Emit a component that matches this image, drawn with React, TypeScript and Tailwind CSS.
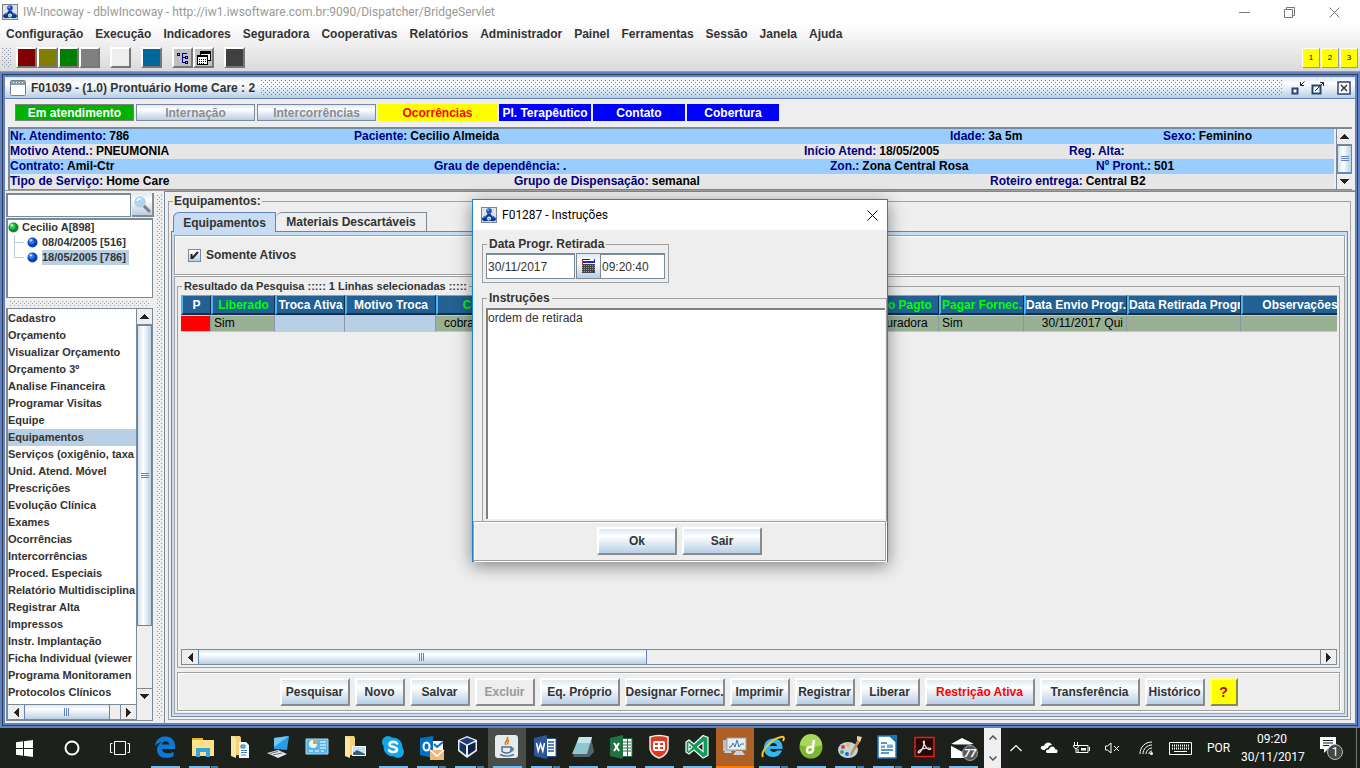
import { ReactNode } from "react";
import clsx from "clsx";

interface Field {
  label: string;
  value: string;
}

interface Column {
  title: string;
  width: string;
  green?: boolean;
  value?: string;
  cell: string;
}

const menus = [
  "Configuração",
  "Execução",
  "Indicadores",
  "Seguradora",
  "Cooperativas",
  "Relatórios",
  "Administrador",
  "Painel",
  "Ferramentas",
  "Sessão",
  "Janela",
  "Ajuda",
];

const infoRows: { grid: string; fields: Field[] }[] = [
  {
    grid: "grid-cols-[344fr_596fr_213fr_171fr] bg-[#99ccff]",
    fields: [
      { label: "Nr. Atendimento:", value: "786" },
      { label: "Paciente:", value: "Cecilio Almeida" },
      { label: "Idade:", value: "3a 5m" },
      { label: "Sexo:", value: "Feminino" },
    ],
  },
  {
    grid: "grid-cols-[794fr_265fr_265fr] bg-[#e6e6e6]",
    fields: [
      { label: "Motivo Atend.:", value: "PNEUMONIA" },
      { label: "Início Atend:", value: "18/05/2005" },
      { label: "Reg. Alta:", value: "" },
    ],
  },
  {
    grid: "grid-cols-[424fr_396fr_266fr_238fr] bg-[#99ccff]",
    fields: [
      { label: "Contrato:", value: "Amil-Ctr" },
      { label: "Grau de dependência:", value: "." },
      { label: "Zon.:", value: "Zona Central Rosa" },
      { label: "Nº Pront.:", value: "501" },
    ],
  },
  {
    grid: "grid-cols-[504fr_476fr_344fr] bg-[#e6e6e6]",
    fields: [
      { label: "Tipo de Serviço:", value: "Home Care" },
      { label: "Grupo de Dispensação:", value: "semanal" },
      { label: "Roteiro entrega:", value: "Central B2" },
    ],
  },
];

const sections = [
  "Cadastro",
  "Orçamento",
  "Visualizar Orçamento",
  "Orçamento 3º",
  "Analise Financeira",
  "Programar Visitas",
  "Equipe",
  "Equipamentos",
  "Serviços (oxigênio, taxa",
  "Unid. Atend. Móvel",
  "Prescrições",
  "Evolução Clínica",
  "Exames",
  "Ocorrências",
  "Intercorrências",
  "Proced. Especiais",
  "Relatório Multidisciplina",
  "Registrar Alta",
  "Impressos",
  "Instr. Implantação",
  "Ficha Individual (viewer",
  "Programa Monitoramen",
  "Protocolos Clínicos",
];

const columns: Column[] = [
  { title: "P", width: "w-[30px]", cell: "bg-[#ff0000]" },
  { title: "Liberado", width: "w-[64px]", green: true, value: "Sim", cell: "bg-[#99b095]" },
  { title: "Troca Ativa", width: "w-[70px]", cell: "bg-[#b8cfe5]" },
  { title: "Motivo Troca", width: "w-[91px]", cell: "bg-[#b8cfe5]" },
  { title: "Cobrança", width: "w-[108px]", green: true, value: "cobrança", cell: "bg-[#99b095] pl-2" },
  { title: "", width: "w-[318px]", cell: "bg-[#99b095]" },
  { title: "Tipo Pagto", width: "w-[77px]", green: true, value: "Seguradora", cell: "bg-[#99b095]" },
  { title: "Pagar Fornec.", width: "w-[85px]", green: true, value: "Sim", cell: "bg-[#99b095]" },
  { title: "Data Envio Progr.", width: "w-[103px]", value: "30/11/2017 Qui", cell: "bg-[#99b095] text-right" },
  { title: "Data Retirada Progr.", width: "w-[114px]", cell: "bg-[#99b095]" },
  { title: "Observações", width: "w-[117px]", cell: "bg-[#99b095]" },
];

const raised =
  "border-2 border-t-white border-l-white border-r-[#8a8a8a] border-b-[#8a8a8a] text-xs font-bold text-[#333] whitespace-nowrap flex items-center justify-center";
const metal = "bg-linear-to-b from-[#dde8f3] via-white via-30% to-[#b8cfe5]";
const etched = "border border-[#a0a0a0] shadow-[inset_1px_1px_0_#fff,1px_1px_0_#fff]";
const dots = "bg-size-[4px_4px] bg-position-[0_0,2px_2px]";
const blueDots =
  "bg-[conic-gradient(at_1px_1px,transparent_75%,#6382bf_0),conic-gradient(at_1px_1px,transparent_75%,#6382bf_0)]";
const grayDots =
  "bg-[conic-gradient(at_1px_1px,transparent_75%,#8a97a5_0),conic-gradient(at_1px_1px,transparent_75%,#8a97a5_0)]";

function AppIcon() {
  return (
    <svg viewBox="0 0 16 16" className="size-4 shrink-0">
      <rect x=".5" y=".5" width="15" height="15" fill="#dfe3e8" stroke="#7f848c" />
      <path d="M6.500 6.500h3l1 2c3 .5 4.500 2 4.500 3.500 0 2-2.500 2.500-4 2H5c-1.500.5-4 0-4-2 0-1.500 1.500-3 4.500-3.500z" fill="#0a3aa0" />
      <path d="M2.500 11c.5-1 1.500-1.500 2.500-1.500M13.500 11c-.5-1-1.500-1.500-2.500-1.500" stroke="#5f9df0" fill="none" />
      <circle cx="8" cy="4" r="2.800" fill="#1450b8" />
      <circle cx="7.200" cy="3.200" r="1.100" fill="#6ea8f5" />
      <circle cx="8" cy="11.500" r="2" fill="#e6f5ea" />
      <path d="M7.200 10.800l1.800 2" stroke="#2c8a3f" />
    </svg>
  );
}

function Arrow({ dir }: { dir: "up" | "down" | "left" | "right" }) {
  const shapes = {
    up: "M4 0h1l4 5H0z",
    down: "M0 0h9L5 5H4z",
    left: "M5 0v9L0 5V4z",
    right: "M0 0l5 4v1L0 9z",
  };
  const wide = dir === "up" || dir === "down";
  return (
    <svg width={wide ? 9 : 5} height={wide ? 5 : 9} shapeRendering="crispEdges">
      <path d={shapes[dir]} fill="#222" />
    </svg>
  );
}

function VScroll({ thumb }: { thumb: string }) {
  return (
    <div className="w-4 shrink-0 flex flex-col border-l border-[#7a8a99] bg-[#eee]">
      <button aria-label="Rolar para cima" className="h-4 shrink-0 flex items-center justify-center border-b border-[#7a8a99]">
        <Arrow dir="up" />
      </button>
      <div className="flex-1 min-h-0">
        <div className={clsx("border border-[#6382bf] bg-linear-to-r from-[#cfdfee] via-white via-40% to-[#b8cfe5] flex items-center justify-center", thumb)}>
          <span className="w-2 h-[6px] bg-[repeating-linear-gradient(#6382bf_0_1px,transparent_1px_2px)]" />
        </div>
      </div>
      <button aria-label="Rolar para baixo" className="h-4 shrink-0 flex items-center justify-center border-t border-[#7a8a99]">
        <Arrow dir="down" />
      </button>
    </div>
  );
}

function HScroll({ thumb }: { thumb: string }) {
  return (
    <div className="h-4 flex flex-1 min-w-0 border-y border-[#7a8a99] bg-[#eee]">
      <button aria-label="Rolar para a esquerda" className="w-4 shrink-0 flex items-center justify-center">
        <Arrow dir="left" />
      </button>
      <div className="flex-1 min-w-0 flex">
        <div className={clsx("border-x border-[#6382bf] flex items-center justify-center", metal, thumb)}>
          <span className="h-2 w-[6px] bg-[repeating-linear-gradient(90deg,#6382bf_0_1px,transparent_1px_2px)]" />
        </div>
      </div>
      <button aria-label="Rolar para a direita" className="w-4 shrink-0 flex items-center justify-center border-l border-[#7a8a99]">
        <Arrow dir="right" />
      </button>
    </div>
  );
}

function TitleBar() {
  return (
    <header className="h-6 bg-white flex items-center pl-[2px] gap-[5px] text-[#999]">
      <AppIcon />
      <h1 className="font-['Roboto',sans-serif] text-xs flex-1">
        IW-Incoway - dblwIncoway - http://iw1.iwsoftware.com.br:9090/Dispatcher/BridgeServlet
      </h1>
      <div className="flex gap-[34px] pr-5">
        <button aria-label="Minimizar">
          <svg width="11" height="11" stroke="#777"><path d="M0 5.500h11" /></svg>
        </button>
        <button aria-label="Restaurar">
          <svg width="11" height="11" stroke="#777" fill="none">
            <path d="M.5 2.500h8v8h-8zM2.500 2.500v-2h8v8h-2" />
          </svg>
        </button>
        <button aria-label="Fechar">
          <svg width="11" height="11" stroke="#777"><path d="M.5.5l10 10M10.500.5l-10 10" /></svg>
        </button>
      </div>
    </header>
  );
}

function ToolButton({ color, label, children }: { color: string; label: string; children?: ReactNode }) {
  return (
    <button
      aria-label={label}
      className={clsx("size-[21px] border-2 border-t-white border-l-white border-r-[#777] border-b-[#777] flex items-center justify-center", color)}
    >
      {children}
    </button>
  );
}

function MenuAndTools() {
  return (
    <div className="bg-linear-to-b from-white to-[#dadada] border-b border-[#999]">
      <nav className="h-5 flex items-center gap-3 px-[6px] text-xs font-bold text-[#333]">
        {menus.map((item) => (
          <button key={item}>{item}</button>
        ))}
      </nav>
      <div className="h-[27px] flex items-center pl-[2px] pr-[2px]">
        <span className={clsx("w-[10px] h-5 mr-1", grayDots, dots)} />
        <ToolButton color="bg-[#800000]" label="Vermelho" />
        <ToolButton color="bg-[#808000]" label="Oliva" />
        <ToolButton color="bg-[#008000]" label="Verde" />
        <ToolButton color="bg-[#808080]" label="Cinza" />
        <span className="w-[10px]" />
        <ToolButton color="bg-[#eee]" label="Branco" />
        <span className="w-[10px]" />
        <ToolButton color="bg-[#006699]" label="Azul" />
        <span className="w-[10px]" />
        <ToolButton color="bg-[#c0c0c0]" label="Árvore">
          <svg width="14" height="14" fill="none" stroke="#000080" shapeRendering="crispEdges">
            <path d="M1.500 2.500h2v2h-2zM6.500 2v10M6 2.500h5M7 6.500h2M7 11.500h2M9.500 5.500h2v2h-2zM9.500 10.500h2v2h-2z" />
          </svg>
        </ToolButton>
        <ToolButton color="bg-[#c0c0c0]" label="Janelas">
          <svg width="16" height="15" shapeRendering="crispEdges">
            <path d="M4.500 1.500h10v9h-10z" fill="#fff" stroke="#000" />
            <path d="M4 1h11v3H4z" />
            <path d="M1.500 5.500h10v9h-10z" fill="#fff" stroke="#000" />
            <path d="M1 5h11v2H1z" />
            <path d="M3 9.500h7M3 11.500h7M3 13.500h5" stroke="#000" strokeDasharray="1 1" />
          </svg>
        </ToolButton>
        <span className="w-[10px]" />
        <ToolButton color="bg-[#404040]" label="Preto" />
        <div className="ml-auto flex gap-px text-[8px] text-black">
          {["1", "2", "3"].map((n) => (
            <button key={n} className="w-[18px] h-5 bg-[#ffff00] border border-t-white border-l-white border-r-[#999] border-b-[#999]">
              {n}
            </button>
          ))}
        </div>
      </div>
    </div>
  );
}

function FrameTitle() {
  return (
    <div className="h-[22px] bg-linear-to-b from-[#dde8f3] via-white via-30% to-[#b8cfe5] border-b border-[#6382bf] flex items-center pl-[5px] pr-1">
      <svg width="16" height="16">
        <rect x=".5" y=".5" width="15" height="15" rx="1" fill="#fff" stroke="#73808e" />
        <path d="M1 1h14v4H1z" fill="#8b9aab" />
        <path d="M3 2.500h11" stroke="#fff" strokeDasharray="1 2" />
      </svg>
      <h2 className="text-xs font-bold text-[#333] ml-[5px] mr-[6px]">F01039 - (1.0) Prontuário Home Care : 2</h2>
      <span className={clsx("flex-1 h-[15px]", blueDots, dots)} />
      <div className="flex gap-[6px] pl-2">
        <button aria-label="Minimizar quadro">
          <svg width="14" height="16" fill="none" stroke="#222">
            <path d="M1.500 8.500h5v5h-5z" fill="#fff" stroke="#2c4374" strokeWidth="2" />
            <path d="M9.500 2v3.500H13M13.500 1.500l-4 4" />
          </svg>
        </button>
        <button aria-label="Maximizar quadro">
          <svg width="14" height="16" fill="none" stroke="#222">
            <path d="M1.500 5.500h8v8h-8z" fill="#fff" stroke="#2c4374" strokeWidth="2" />
            <path d="M4 11l8.500-8.500M9 2.500h3.500V6" />
          </svg>
        </button>
        <button aria-label="Fechar quadro" className="pl-[6px]">
          <svg width="14" height="16" fill="none" stroke="#222">
            <path d="M1 2h12v12H1z" fill="#fff" stroke="#2c4374" strokeWidth="1.500" />
            <path d="M4 5l6 6M10 5l-6 6" strokeWidth="1.200" />
          </svg>
        </button>
      </div>
    </div>
  );
}

function StatusButtons() {
  const base = "h-[17px] text-xs font-bold flex items-center justify-center whitespace-nowrap";
  return (
    <div className="h-7 pt-[5px] pl-[10px] flex gap-[2px]">
      <button className={clsx(base, "w-[119px] bg-[#00b200] text-white border border-[#808080]")}>Em atendimento</button>
      <button disabled className={clsx(base, metal, "w-[119px] text-[#8c8c8c] border border-[#7a8a99]")}>Internação</button>
      <button disabled className={clsx(base, metal, "w-[119px] text-[#8c8c8c] border border-[#7a8a99]")}>Intercorrências</button>
      <button className={clsx(base, "w-[119px] bg-[#ffff00] text-[#ff0000]")}>Ocorrências</button>
      <button className={clsx(base, "w-[92px] bg-[#0000ff] text-white")}>Pl. Terapêutico</button>
      <button className={clsx(base, "w-[92px] bg-[#0000ff] text-white")}>Contato</button>
      <button className={clsx(base, "w-[92px] bg-[#0000ff] text-white")}>Cobertura</button>
    </div>
  );
}

function PatientInfo() {
  return (
    <div className="mx-[3px] flex gap-[2px] border-t-2 border-l-2 border-b border-[#7a8a99] bg-[#eee]">
      <div className="flex-1">
        {infoRows.map((row, i) => (
          <dl key={i} className={clsx("grid text-xs leading-[15px] font-bold h-[15px] whitespace-nowrap", row.grid)}>
            {row.fields.map((field) => (
              <div key={field.label} className="flex gap-[3px]">
                <dt className="text-[#000080]">{field.label}</dt>
                <dd className="text-black">{field.value}</dd>
              </div>
            ))}
          </dl>
        ))}
      </div>
      <VScroll thumb="h-full" />
    </div>
  );
}

function Ball({ green }: { green?: boolean }) {
  return (
    <svg width="11" height="11" className="shrink-0">
      <circle cx="5.500" cy="5.500" r="5" fill={green ? "#0c8a2c" : "#0b3fae"} />
      <circle cx="4.500" cy="4.200" r="3" fill={green ? "#38c453" : "#3374e6"} />
      <circle cx="3.800" cy="3.300" r="1.300" fill={green ? "#c5f5cb" : "#bcd7ff"} />
    </svg>
  );
}

function Sidebar() {
  return (
    <aside className="w-[148px] shrink-0 flex flex-col text-[11px] font-bold text-[#333]">
      <form className="flex h-6 gap-px">
        <input aria-label="Pesquisar paciente" className="w-[125px] bg-white border-2 border-[#7a8a99] border-r border-b" />
        <button type="button" aria-label="Pesquisar" className={clsx("flex-1 flex items-center justify-center border-r-2 border-b-2 border-[#8a8a8a]", metal)}>
          <svg width="18" height="18" fill="none">
            <path d="M10.500 10.500l5.500 5.500" stroke="#7d7f84" strokeWidth="3" strokeLinecap="round" />
            <circle cx="7" cy="7" r="5" fill="#a5d8f6" stroke="#c5ccd6" strokeWidth="1.500" />
            <path d="M4 6c.6-1.800 2.500-2.500 4-2" stroke="#fff" strokeWidth="1.500" />
          </svg>
        </button>
      </form>
      <ul className="mt-px mr-px h-20 bg-white border border-[#7a8a99] border-l-2 border-t-2 leading-[15px]">
        <li>
          <span className="flex items-center gap-[3px] h-[15px]">
            <Ball green />
            Cecilio A[898]
          </span>
          <ul className="ml-[6px]">
            <li className="flex items-center h-[15px]">
              <span className="w-[10px] h-[15px] border-l border-[#b8cfe5] flex items-center">
                <span className="w-full h-px bg-[#b8cfe5]" />
              </span>
              <span className="ml-[3px] mr-1 flex"><Ball /></span>
              08/04/2005 [516]
            </li>
            <li className="flex items-center h-[15px]">
              <span className="w-[10px] h-[15px]">
                <span className="block h-2 border-l border-b border-[#b8cfe5]" />
              </span>
              <span className="ml-[3px] mr-1 flex"><Ball /></span>
              <span className="bg-[#b8cfe5] pr-[3px]">18/05/2005 [786]</span>
            </li>
          </ul>
        </li>
      </ul>
      <div className="h-[10px] flex items-center px-1">
        <span className={clsx("h-[5px] flex-1", grayDots, dots)} />
      </div>
      <div className="flex-1 min-h-0 mr-px flex flex-col border border-[#7a8a99] border-l-2">
        <div className="flex-1 min-h-0 flex bg-white">
          <ul className="flex-1 min-w-0 overflow-hidden pt-px">
            {sections.map((item) => (
              <li key={item} className={clsx("h-[17px] leading-[17px] whitespace-nowrap", item === "Equipamentos" && "bg-[#b8cfe5]")}>
                {item}
              </li>
            ))}
          </ul>
          <VScroll thumb="h-[83%]" />
        </div>
        <div className="flex bg-[#eee]">
          <HScroll thumb="w-[90%]" />
          <span className="w-4 border-l border-[#7a8a99]" />
        </div>
      </div>
    </aside>
  );
}

function ResultTable() {
  return (
    <div className="overflow-hidden flex-1 min-h-0 mt-[2px]">
      <table className="table-fixed w-[1177px] border-separate border-spacing-0 text-xs whitespace-nowrap">
        <thead>
          <tr>
            {columns.map((col, i) => (
              <th
                key={i}
                className={clsx(
                  "h-5 p-0 overflow-hidden bg-[#236093] border-t border-l-2 border-t-[#4fb3f5] border-l-[#4fb3f5] border-r border-b-2 border-r-[#12304a] border-b-[#12304a] leading-[16px]",
                  col.width,
                  col.green ? "text-[#00ff00]" : "text-white"
                )}
              >
                {col.title}
              </th>
            ))}
          </tr>
        </thead>
        <tbody>
          <tr>
            {columns.map((col, i) => (
              <td key={i} className={clsx("h-[17px] px-[3px] py-0 leading-[15px] overflow-hidden text-black border-y border-y-[#c8c8c8] border-r border-r-[#8a97a5]", col.cell)}>
                {col.value}
              </td>
            ))}
          </tr>
        </tbody>
      </table>
    </div>
  );
}

function ActionBar() {
  return (
    <div className={clsx("h-[39px] shrink-0 mr-[2px] flex items-center justify-center gap-[5px]", etched)}>
      <button className={clsx(raised, metal, "w-[70px] h-7")}>Pesquisar</button>
      <button className={clsx(raised, metal, "w-[50px] h-7")}>Novo</button>
      <button className={clsx(raised, metal, "w-[60px] h-7")}>Salvar</button>
      <button disabled className="w-[60px] h-7 border-2 border-t-white border-l-white border-r-[#8a8a8a] border-b-[#8a8a8a] text-xs font-bold text-[#999]">
        Excluir
      </button>
      <button className={clsx(raised, metal, "w-20 h-7")}>Eq. Próprio</button>
      <button className={clsx(raised, metal, "w-[100px] h-7")}>Designar Fornec.</button>
      <button className={clsx(raised, metal, "w-[60px] h-7")}>Imprimir</button>
      <button className={clsx(raised, metal, "w-[60px] h-7")}>Registrar</button>
      <button className={clsx(raised, metal, "w-[60px] h-7")}>Liberar</button>
      <button className={clsx("w-[110px] h-7 border-2 border-t-white border-l-white border-r-[#8a8a8a] border-b-[#8a8a8a] text-xs font-bold text-[#ff0000]", metal)}>
        Restrição Ativa
      </button>
      <button className={clsx(raised, metal, "w-[100px] h-7")}>Transferência</button>
      <button className={clsx(raised, metal, "w-[60px] h-7")}>Histórico</button>
      <button className="w-7 h-7 bg-[#ffff00] border-2 border-t-[#ffff80] border-l-[#ffff80] border-r-[#8a8a4a] border-b-[#8a8a4a] text-sm font-bold text-[#c00000]">
        ?
      </button>
    </div>
  );
}

function Equipment() {
  return (
    <main className="flex-1 min-w-0 flex border-l border-t border-[#7a8a99] pl-[3px] pr-1 pt-[2px] pb-[3px]">
      <fieldset className="flex-1 min-w-0 flex flex-col border border-[#a0a0a0] px-[2px] pb-[2px]">
        <legend className="text-xs leading-[14px] font-bold text-[#333] ml-[2px] px-px">Equipamentos:</legend>
        <div role="tablist" className="flex items-end pl-[2px] mt-1 text-xs font-bold text-[#333] relative -mb-px">
          <button role="tab" aria-selected="true" className="w-[103px] h-5 bg-[#c8ddf2] border border-b-0 border-[#6382bf] rounded-tl-md">
            Equipamentos
          </button>
          <button role="tab" aria-selected="false" className="w-[151px] h-5 border border-l-0 border-[#7a8a99] border-b-[#6382bf] rounded-tl-md">
            Materiais Descartáveis
          </button>
        </div>
        <div className="flex-1 min-h-0 flex flex-col border border-[#6382bf] border-r-[#7a8a99] border-b-[#7a8a99] bg-[#c8ddf2] px-[2px] pt-[3px] pb-[2px]">
          <div className="flex-1 min-h-0 flex flex-col bg-[#eee]">
            <div className={clsx("h-10 shrink-0 flex items-center pl-[13px]", etched)}>
              <label className="flex items-center gap-[5px] text-xs font-bold text-[#333]">
                <input
                  type="checkbox"
                  defaultChecked
                  className="peer appearance-none size-[13px] border border-[#7a8a99] bg-linear-to-b from-white to-[#b8cfe5]"
                />
                <svg width="9" height="9" className="hidden peer-checked:block -ml-4 mr-[2px]" fill="none" stroke="#222" strokeWidth="2">
                  <path d="M1.500 3v5M2 7.500L8 1" />
                </svg>
                Somente Ativos
              </label>
            </div>
            <div className="flex-1 min-h-0 flex flex-col border border-[#a0a0a0] mt-px p-[2px] gap-1">
              <fieldset className="flex-1 min-h-0 min-w-0 flex flex-col border border-[#a0a0a0] mr-[2px] pl-[3px] pr-[2px] pb-[2px]">
                <legend className="text-[11px] leading-[14px] font-bold text-[#333] ml-px px-[2px]">
                  Resultado da Pesquisa ::::: 1 Linhas selecionadas :::::
                </legend>
                <ResultTable />
                <div className="flex border-x border-[#7a8a99]">
                  <HScroll thumb="w-[40%]" />
                </div>
              </fieldset>
              <ActionBar />
            </div>
          </div>
        </div>
      </fieldset>
    </main>
  );
}

function InstructionsDialog() {
  return (
    <div
      role="dialog"
      aria-label="F01287 - Instruções"
      className="absolute inset-x-0 mx-auto top-[199px] w-[416px] h-[363px] bg-[#eee] border border-[#1883d7] shadow-[0_4px_16px_rgba(0,0,0,0.45)] flex flex-col"
    >
      <div className="h-[30px] bg-white flex items-center pl-2 pr-[9px] gap-[5px]">
        <AppIcon />
        <h3 className="font-['Roboto',sans-serif] text-xs text-black flex-1">F01287 - Instruções</h3>
        <button aria-label="Fechar">
          <svg width="11" height="11" stroke="#000"><path d="M.5.5l10 10M10.500.5l-10 10" /></svg>
        </button>
      </div>
      <div className="flex-1 min-h-0 flex flex-col pl-[9px] pt-[7px] gap-2">
        <fieldset className="w-[186px] border border-[#a0a0a0] px-[3px] pb-[3px]">
          <legend className="text-xs leading-[14px] font-bold text-[#333] ml-px px-[2px]">Data Progr. Retirada</legend>
          <div className="flex h-[26px] mt-[2px]">
            <input
              aria-label="Data"
              defaultValue="30/11/2017"
              className="w-[89px] bg-white border border-t-2 border-[#7a8a99] pl-px text-xs text-[#333]"
            />
            <button aria-label="Calendário" className={clsx("w-[25px] ml-px border border-[#7a8a99] flex items-center justify-center", metal)}>
              <svg width="15" height="16" shapeRendering="crispEdges">
                <path d="M1 1h8v1H1z" fill="#333" />
                <path d="M1 3h13v2H1z" fill="#2222dd" />
                <path d="M1 2h1v4H1z" fill="#d22" />
                <path d="M13 1h1v3h-1z" fill="#2222dd" />
                <path d="M1 6h13v9H1z" fill="#444" />
                <path d="M1 7.500h13M1 9.500h13M1 11.500h13M1 13.500h10" stroke="#999" strokeDasharray="1 1" />
              </svg>
            </button>
            <input
              aria-label="Hora"
              defaultValue="09:20:40"
              className="w-[64px] bg-white border border-l-0 border-t-2 border-[#7a8a99] pl-px text-xs text-[#333]"
            />
          </div>
        </fieldset>
        <fieldset className="flex-1 min-h-0 flex flex-col border border-b-0 border-[#a0a0a0] pl-[3px] pr-px pb-[2px]">
          <legend className="text-xs leading-[14px] font-bold text-[#333] ml-px px-[2px]">Instruções</legend>
          <textarea
            aria-label="Instruções"
            defaultValue="ordem de retirada"
            className="flex-1 mt-[3px] resize-none bg-white border-t-2 border-l-2 border-[#808080] pr-px pt-px text-xs leading-[14px] text-[#333]"
          />
        </fieldset>
      </div>
      <div className={clsx("h-10 mr-px flex items-center justify-center gap-[5px]", etched)}>
        <button className={clsx(raised, metal, "w-20 h-7")}>Ok</button>
        <button className={clsx(raised, metal, "w-20 h-7")}>Sair</button>
      </div>
    </div>
  );
}

function Folder() {
  return (
    <>
      <path d="M4 3h9l1 2v18l-3-1-7 1z" fill="#f3d27a" />
      <path d="M4 3l5 2v20l-5-2z" fill="#fbe6a2" />
    </>
  );
}

const tasks: { name: string; bar?: "one" | "many"; look?: string; art: ReactNode }[] = [
  {
    name: "Edge",
    bar: "one",
    art: (
      <path
        d="M4 13C5 6 9 3.500 14.500 3.500 21 3.500 24 8 24 13v3H11c.3 3 3 4.300 6 4.300 2 0 4-.5 5.500-1.500v4.500c-2 1.200-4.500 1.700-7 1.700-6 0-9.500-3.500-9.500-8.500 0-3.300 2-6 5-7.300-2.500 0-5 1.500-7 3.800zM11 11.500h7c0-2-1.200-3.500-3.300-3.500-2 0-3.400 1.300-3.700 3.500z"
        fill="#0a78d7"
        fillRule="evenodd"
      />
    ),
  },
  {
    name: "Explorador de Arquivos",
    bar: "many",
    art: (
      <>
        <path d="M3 5h11v3H3z" fill="#e9b52b" />
        <path d="M3 7h22v16H3z" fill="#fde08a" />
        <path d="M7 15h14v9h-4v-5h-6v5H7z" fill="#37a3dd" />
      </>
    ),
  },
  {
    name: "Documentos",
    art: (
      <>
        <Folder />
        <path d="M12 9h7l3 3v13H12z" fill="#f8f9fa" />
        <path d="M14 12h4v3h-4zM14 17.500h6M14 19.500h6M14 22h5" stroke="#3d82bd" fill="#76b7e5" />
      </>
    ),
  },
  {
    name: "Este Computador",
    art: (
      <>
        <path d="M9 5l15-2-2 14-13-1z" fill="#2a9be6" />
        <path d="M9 5l15-2-15 11z" fill="#71c6fa" />
        <path d="M2 20l11-3 9 4-9 4z" fill="#dfe5ea" />
        <path d="M5 20.500l8-2M8 22l9-2" stroke="#68747e" />
      </>
    ),
  },
  {
    name: "Painel de Controle",
    art: (
      <>
        <path d="M3 6h22v15H3z" fill="#5ab5e8" stroke="#a6ddf7" />
        <circle cx="10" cy="11" r="4" fill="#eaf7ff" />
        <path d="M10 11V7a4 4 0 014 4z" fill="#f7941d" />
        <path d="M17 9h6M17 12h6M17 15h6" stroke="#fff" />
        <path d="M6 18h15" stroke="#fff" strokeDasharray="4 2" />
      </>
    ),
  },
  {
    name: "Imagens",
    art: (
      <>
        <Folder />
        <path d="M11.500 13.500h13v9h-13z" fill="#bfe1f5" stroke="#fff" />
        <path d="M12 20l4-3 8 4v1H12z" fill="#3d5b6e" />
      </>
    ),
  },
  {
    name: "Skype",
    bar: "one",
    art: (
      <>
        <circle cx="14" cy="14" r="9.500" fill="#12a5e8" />
        <circle cx="9" cy="9" r="6" fill="#12a5e8" />
        <circle cx="19" cy="19" r="6" fill="#12a5e8" />
        <path
          d="M18 10.500C17 8.500 11 8 10.500 11.300 10.300 14.500 18 13 18 16.600 17.500 20 11 19.500 10 17"
          fill="none"
          stroke="#fff"
          strokeWidth="2.600"
          strokeLinecap="round"
        />
      </>
    ),
  },
  {
    name: "Outlook",
    bar: "many",
    art: (
      <>
        <path d="M3 5l13-2v22L3 22z" fill="#0072c6" />
        <path d="M16 8h10v9H16z" fill="#fff" />
        <path d="M17 11l3 3 6-5" stroke="#0072c6" strokeWidth="2" fill="none" />
        <ellipse cx="9.500" cy="13.500" rx="3" ry="4" fill="none" stroke="#fff" strokeWidth="2" />
        <path d="M13 17h14v10H13z" fill="#eeb97c" />
        <path d="M13 17l7 6 7-6" stroke="#fff" strokeWidth="1.500" fill="none" />
      </>
    ),
  },
  {
    name: "VirtualBox",
    bar: "many",
    art: (
      <>
        <path d="M12 3l10 4v11l-10 7-9-7V7z" fill="#e8edf5" />
        <path d="M12 4.500l8 3-8 4-7.500-4z" fill="#1c3e74" />
        <path d="M4.500 9l6.500 3.500v9.500l-6.500-5z" fill="#14305e" />
        <path d="M20.500 9L13 12.500V22l7.500-5z" fill="#0e2348" />
      </>
    ),
  },
  {
    name: "Java",
    bar: "one",
    look: "bg-[#4a4e4a]",
    art: (
      <>
        <rect x="2" y="2" width="23" height="23" rx="3" fill="#e6ebef" />
        <path d="M14 4c3 3-4 4-1 8M16 7c-2 2-1 3-1 4.500" fill="none" stroke="#e76f00" strokeWidth="1.500" />
        <path d="M9 14h9v3c0 2-2 3-4.500 3S9 19 9 17z" fill="none" stroke="#53728d" strokeWidth="1.500" />
        <path d="M18 15c3-.5 3 2.500 0 3M7 21.500c4 2 10 2 14 0" fill="none" stroke="#53728d" strokeWidth="1.500" />
      </>
    ),
  },
  {
    name: "Word",
    bar: "many",
    art: (
      <>
        <path d="M14 5.500h11v18H14z" fill="#fff" stroke="#2b579a" />
        <path d="M17 9h6M17 12h6M17 15h6M17 18h6" stroke="#2b579a" strokeWidth="1.500" />
        <path d="M3 5l13-3v24L3 23z" fill="#2b579a" />
        <path d="M5.500 10l1.700 8 2.300-7 2.300 7 1.700-8" fill="none" stroke="#fff" strokeWidth="1.500" />
      </>
    ),
  },
  {
    name: "Bloco de Notas",
    bar: "one",
    art: (
      <>
        <path d="M10 4h12l3 15-5 5H4z" fill="#50686d" />
        <path d="M10 4h13l-5 17H3z" fill="#8fc6cf" />
        <path d="M10 4h13l-2 6H8z" fill="#c4e4e6" />
      </>
    ),
  },
  {
    name: "Excel",
    bar: "one",
    art: (
      <>
        <path d="M14 5.500h11v18H14z" fill="#fff" stroke="#207245" />
        <path d="M16 9h8M16 12h8M16 15h8M16 18h8M20.500 6v17" stroke="#207245" />
        <path d="M3 5l13-3v24L3 23z" fill="#207245" />
        <path d="M7 10l5 8M12 10l-5 8" stroke="#fff" strokeWidth="2" />
      </>
    ),
  },
  {
    name: "FortiClient",
    bar: "one",
    art: (
      <>
        <path d="M5 4q9-3 18 0v12q-2 7-9 9-7-2-9-9z" fill="#e03a1e" stroke="#eee" strokeWidth="1.500" />
        <rect x="8" y="8" width="12" height="10" rx="2" fill="#fff" />
        <path d="M10 10h3v2h-3zM15 10h3v2h-3zM10 14h3v2h-3zM15 14h3v2h-3z" fill="#e03a1e" />
      </>
    ),
  },
  {
    name: "Visual Studio",
    bar: "one",
    art: (
      <path
        d="M20 2.500l5 2v18l-5 2.500-9-8-5 4-3-2V9l3-2 5 4zM20 9.500L14.500 14l5.500 4.500zM6 11v6l3-3z"
        fill="#0d9d57"
        stroke="#fff"
        strokeWidth="1.200"
        fillRule="evenodd"
      />
    ),
  },
  {
    name: "Monitor de Recursos",
    look: "bg-[#ad5f26] border-b-2 border-[#ff7a0a]",
    art: (
      <>
        <path d="M2 7h13v11H2z" fill="#b9bec2" />
        <path d="M6 5h19v12H6z" fill="#e9eef2" stroke="#9aa3a9" />
        <path d="M8 14h2l2-4 2 4 2-7 2 7 2-3h3" stroke="#2f79b5" fill="none" />
        <path d="M12 22h12l-3-4h-6zM3 20h8l-1-2H4z" fill="#cdd4d9" />
      </>
    ),
  },
  {
    name: "Internet Explorer",
    bar: "many",
    art: (
      <>
        <path
          d="M5 15c0-6 4-9.500 9.500-9.500S24 9 23.500 16H11c.5 3 5 4 7 1.500h5C21 22 18 24 14 24c-5 0-9-3-9-9zm6-2h7c-.5-4-6.500-4-7 0z"
          fill="#35b5ef"
          fillRule="evenodd"
        />
        <path d="M4 24C1 19 12 6 22 4c4-1 3 2 2 4" fill="none" stroke="#f8c81c" strokeWidth="2" />
      </>
    ),
  },
  {
    name: "Dica",
    bar: "one",
    art: (
      <>
        <circle cx="14" cy="14" r="11.500" fill="#7cb82f" />
        <path d="M3 12a11 11 0 0122 0q-11 4-22 0" fill="#a9d65c" />
        <path d="M17 7c-1 4-1 8-1 10-1 3-6 4-6 0 0-3 4-4 6-2" fill="none" stroke="#fff" strokeWidth="2.500" />
      </>
    ),
  },
  {
    name: "Paint",
    bar: "many",
    art: (
      <>
        <ellipse cx="13" cy="17" rx="10" ry="8" fill="#b9d6ec" />
        <circle cx="8" cy="14" r="2" fill="#e33b2e" />
        <circle cx="13" cy="12" r="2" fill="#f5b82e" />
        <circle cx="7" cy="19" r="2" fill="#48a848" />
        <circle cx="12" cy="21" r="2" fill="#2b62c9" />
        <path d="M24 4l2 3-9 15-2 1 1-4z" fill="#cf8a43" />
        <path d="M22 3l5 1-2 5-3-2z" fill="#e8cfa5" />
      </>
    ),
  },
  {
    name: "LibreOffice Writer",
    bar: "many",
    art: (
      <>
        <path d="M5 3h12l6 6v16H5z" fill="#fff" stroke="#1c78b5" strokeWidth="1.500" />
        <path d="M17 2h7v7z" fill="#1c78b5" />
        <path d="M8 10h6M8 17h12M8 20h8" stroke="#1c78b5" strokeWidth="1.500" />
        <path d="M8 12.500h4v2.500H8zM14 11.500h6V15h-6z" fill="#6ab0dc" />
      </>
    ),
  },
  {
    name: "Adobe Reader",
    bar: "many",
    art: (
      <>
        <path d="M4 4.500h19v19H4z" fill="#2c0606" stroke="#d6261b" strokeWidth="1.500" />
        <path
          d="M13 8c-2 0 1 6 4 8 3 1.500 4-1 1-1-4 0-8 1-10 3-2 2 0 3 2 0s4-8 3-10z"
          fill="none"
          stroke="#eee"
          strokeWidth="1.200"
        />
      </>
    ),
  },
];

function Taskbar() {
  return (
    <footer className="h-10 shrink-0 flex bg-linear-to-r from-[#1c221b] via-[#1d201b] to-[#1a1f1a] text-white font-['Roboto',sans-serif] text-xs">
      <button aria-label="Iniciar" className="w-12 flex items-center justify-center">
        <svg width="17" height="17" fill="#fff">
          <path d="M0 2.300L7 1.300V8H0zM8 1.200L17 0v8H8zM0 9h7v6.700l-7-1zM8 9h9v8l-9-1.200z" />
        </svg>
      </button>
      <button aria-label="Cortana" className="w-12 flex items-center justify-center">
        <svg width="16" height="16"><circle cx="8" cy="8" r="6.500" fill="none" stroke="#fff" strokeWidth="2" /></svg>
      </button>
      <button aria-label="Visão de tarefas" className="w-12 flex items-center justify-center">
        <svg width="20" height="14" fill="none" stroke="#fff">
          <path d="M4.500.5h11v13h-11zM2.500 2.500h-2v9h2M17.500 2.500h2v9h-2" />
        </svg>
      </button>
      <div className="flex pl-[2px]">
        {tasks.map((task) => (
          <button key={task.name} aria-label={task.name} className={clsx("w-[38px] flex flex-col items-center justify-between", task.look)}>
            <svg width="28" height="28" className="mt-[5px]">{task.art}</svg>
            {task.bar && (
              <span className="w-[29px] h-[2px] bg-[#76b9ed] flex justify-end">
                {task.bar === "many" && <span className="w-2 bg-[#4a7ba3] border-l border-[#1d201b]" />}
              </span>
            )}
          </button>
        ))}
        <button aria-label="Email" className="w-[38px] flex flex-col items-center justify-between">
          <svg width="30" height="30" className="mt-[5px]">
            <path d="M3 11l11-6 12 6v14H3z" fill="#fff" />
            <path d="M3 11.500l11 6 12-6" stroke="#1d201b" strokeWidth="2" fill="#1d201b" />
            <circle cx="22" cy="20" r="7.500" fill="#565a56" stroke="#999" />
            <text x="22" y="24" fontSize="11" fontStyle="italic" fontWeight="bold" textAnchor="middle" fill="#fff">77</text>
          </svg>
          <span className="w-[29px] h-[2px] bg-[#76b9ed]" />
        </button>
      </div>
      <div className="w-[17px] ml-[2px] bg-[#f0f0f0] flex flex-col items-center justify-between py-[7px]">
        <svg width="8" height="5" fill="none" stroke="#555" strokeWidth="1.500"><path d="M.5 4.500L4 1l3.500 3.500" /></svg>
        <svg width="8" height="5" fill="none" stroke="#555" strokeWidth="1.500"><path d="M.5.5L4 4 7.500.5" /></svg>
      </div>
      <div className="ml-auto flex items-center">
        <svg width="12" height="8" fill="none" stroke="#fff" strokeWidth="1.200" className="mr-[18px]"><path d="M.5 7L6 1.500 11.500 7" /></svg>
        <svg width="18" height="12" fill="#fff" className="mr-[15px]">
          <path d="M3 8C-1 7 1 3 4 4c1-4 6-5 8-1-3 0-4 2-4 3-2 0-3 1-3 2z" />
          <path d="M7 11c-2-1-1-4 2-3.500C10 3 15 4 15 7c3 0 3.500 4 1 4z" />
        </svg>
        <svg width="17" height="12" fill="none" stroke="#fff" className="mr-[15px]">
          <path d="M6 3.500h9v7H5V7M16.500 5v4M1.500 0v3M4.500 0v3M.5 3.500h5c0 2-1 3-2.500 3s-2.500-1-2.500-3zM3 7v3.500h2" />
          <path d="M8 6h5v2.500H8z" fill="#fff" stroke="none" />
        </svg>
        <svg width="16" height="12" fill="none" stroke="#fff" className="mr-[18px]">
          <path d="M.5 4v4h2l3.500 3V1L2.500 4zM9 4l5 5M14 4L9 9" />
        </svg>
        <svg width="15" height="14" fill="none" stroke="#fff" className="mr-[15px]">
          <path d="M1 13C1 6 6 1 13 1M4 13c0-5 4-9 9-9M7 13c0-3 3-6 6-6M10 13c0-2 1-3 3-3" />
          <circle cx="12.500" cy="12.500" r="1.500" fill="#fff" stroke="none" />
        </svg>
        <svg width="23" height="13" fill="none" stroke="#fff" className="mr-[15px]">
          <path d="M.5.5h22v12H.5z" />
          <path d="M3 3.500h17M3 6.500h17" strokeDasharray="1 1" strokeWidth="2" />
          <path d="M5 9.500h13" />
        </svg>
        <span className="w-6 mr-[10px]">POR</span>
        <time className="w-[62px] text-center leading-[18px] mr-[15px]">
          09:20
          <br />
          30/11/2017
        </time>
        <button aria-label="Notificações" className="mr-3">
          <svg width="26" height="28">
            <path d="M2 3h16v12h-8l-4 4v-4H2z" fill="#fff" />
            <path d="M5 6.500h10M5 9h10M5 11.500h6" stroke="#1d201b" />
            <circle cx="17" cy="18" r="7.500" fill="#444844" stroke="#bbb" />
            <text x="17" y="22" fontSize="12" textAnchor="middle" fill="#fff">1</text>
          </svg>
        </button>
        <span className="h-10 w-1 border-l border-[#777]" />
      </div>
    </footer>
  );
}

function App() {
  return (
    <div className="relative h-screen flex flex-col overflow-hidden bg-[#eee] font-['Liberation_Sans',sans-serif]">
      <TitleBar />
      <MenuAndTools />
      <div className="flex-1 min-h-0 flex bg-[#6382bf] p-[2px]">
        <div className="flex-1 min-w-0 flex border border-[#2f3d5c] p-[2px]">
          <section className="flex-1 min-w-0 flex flex-col bg-[#eee]">
            <FrameTitle />
            <StatusButtons />
            <PatientInfo />
            <div className="flex-1 min-h-0 flex border-t border-[#a0a0a0] pl-px">
              <div className="flex pt-[2px] pb-[2px]">
                <Sidebar />
              </div>
              <div className="w-[10px] shrink-0 flex justify-center py-1">
                <span className={clsx("w-[5px]", grayDots, dots)} />
              </div>
              <Equipment />
            </div>
          </section>
        </div>
      </div>
      <Taskbar />
      <InstructionsDialog />
    </div>
  );
}

export default App;
